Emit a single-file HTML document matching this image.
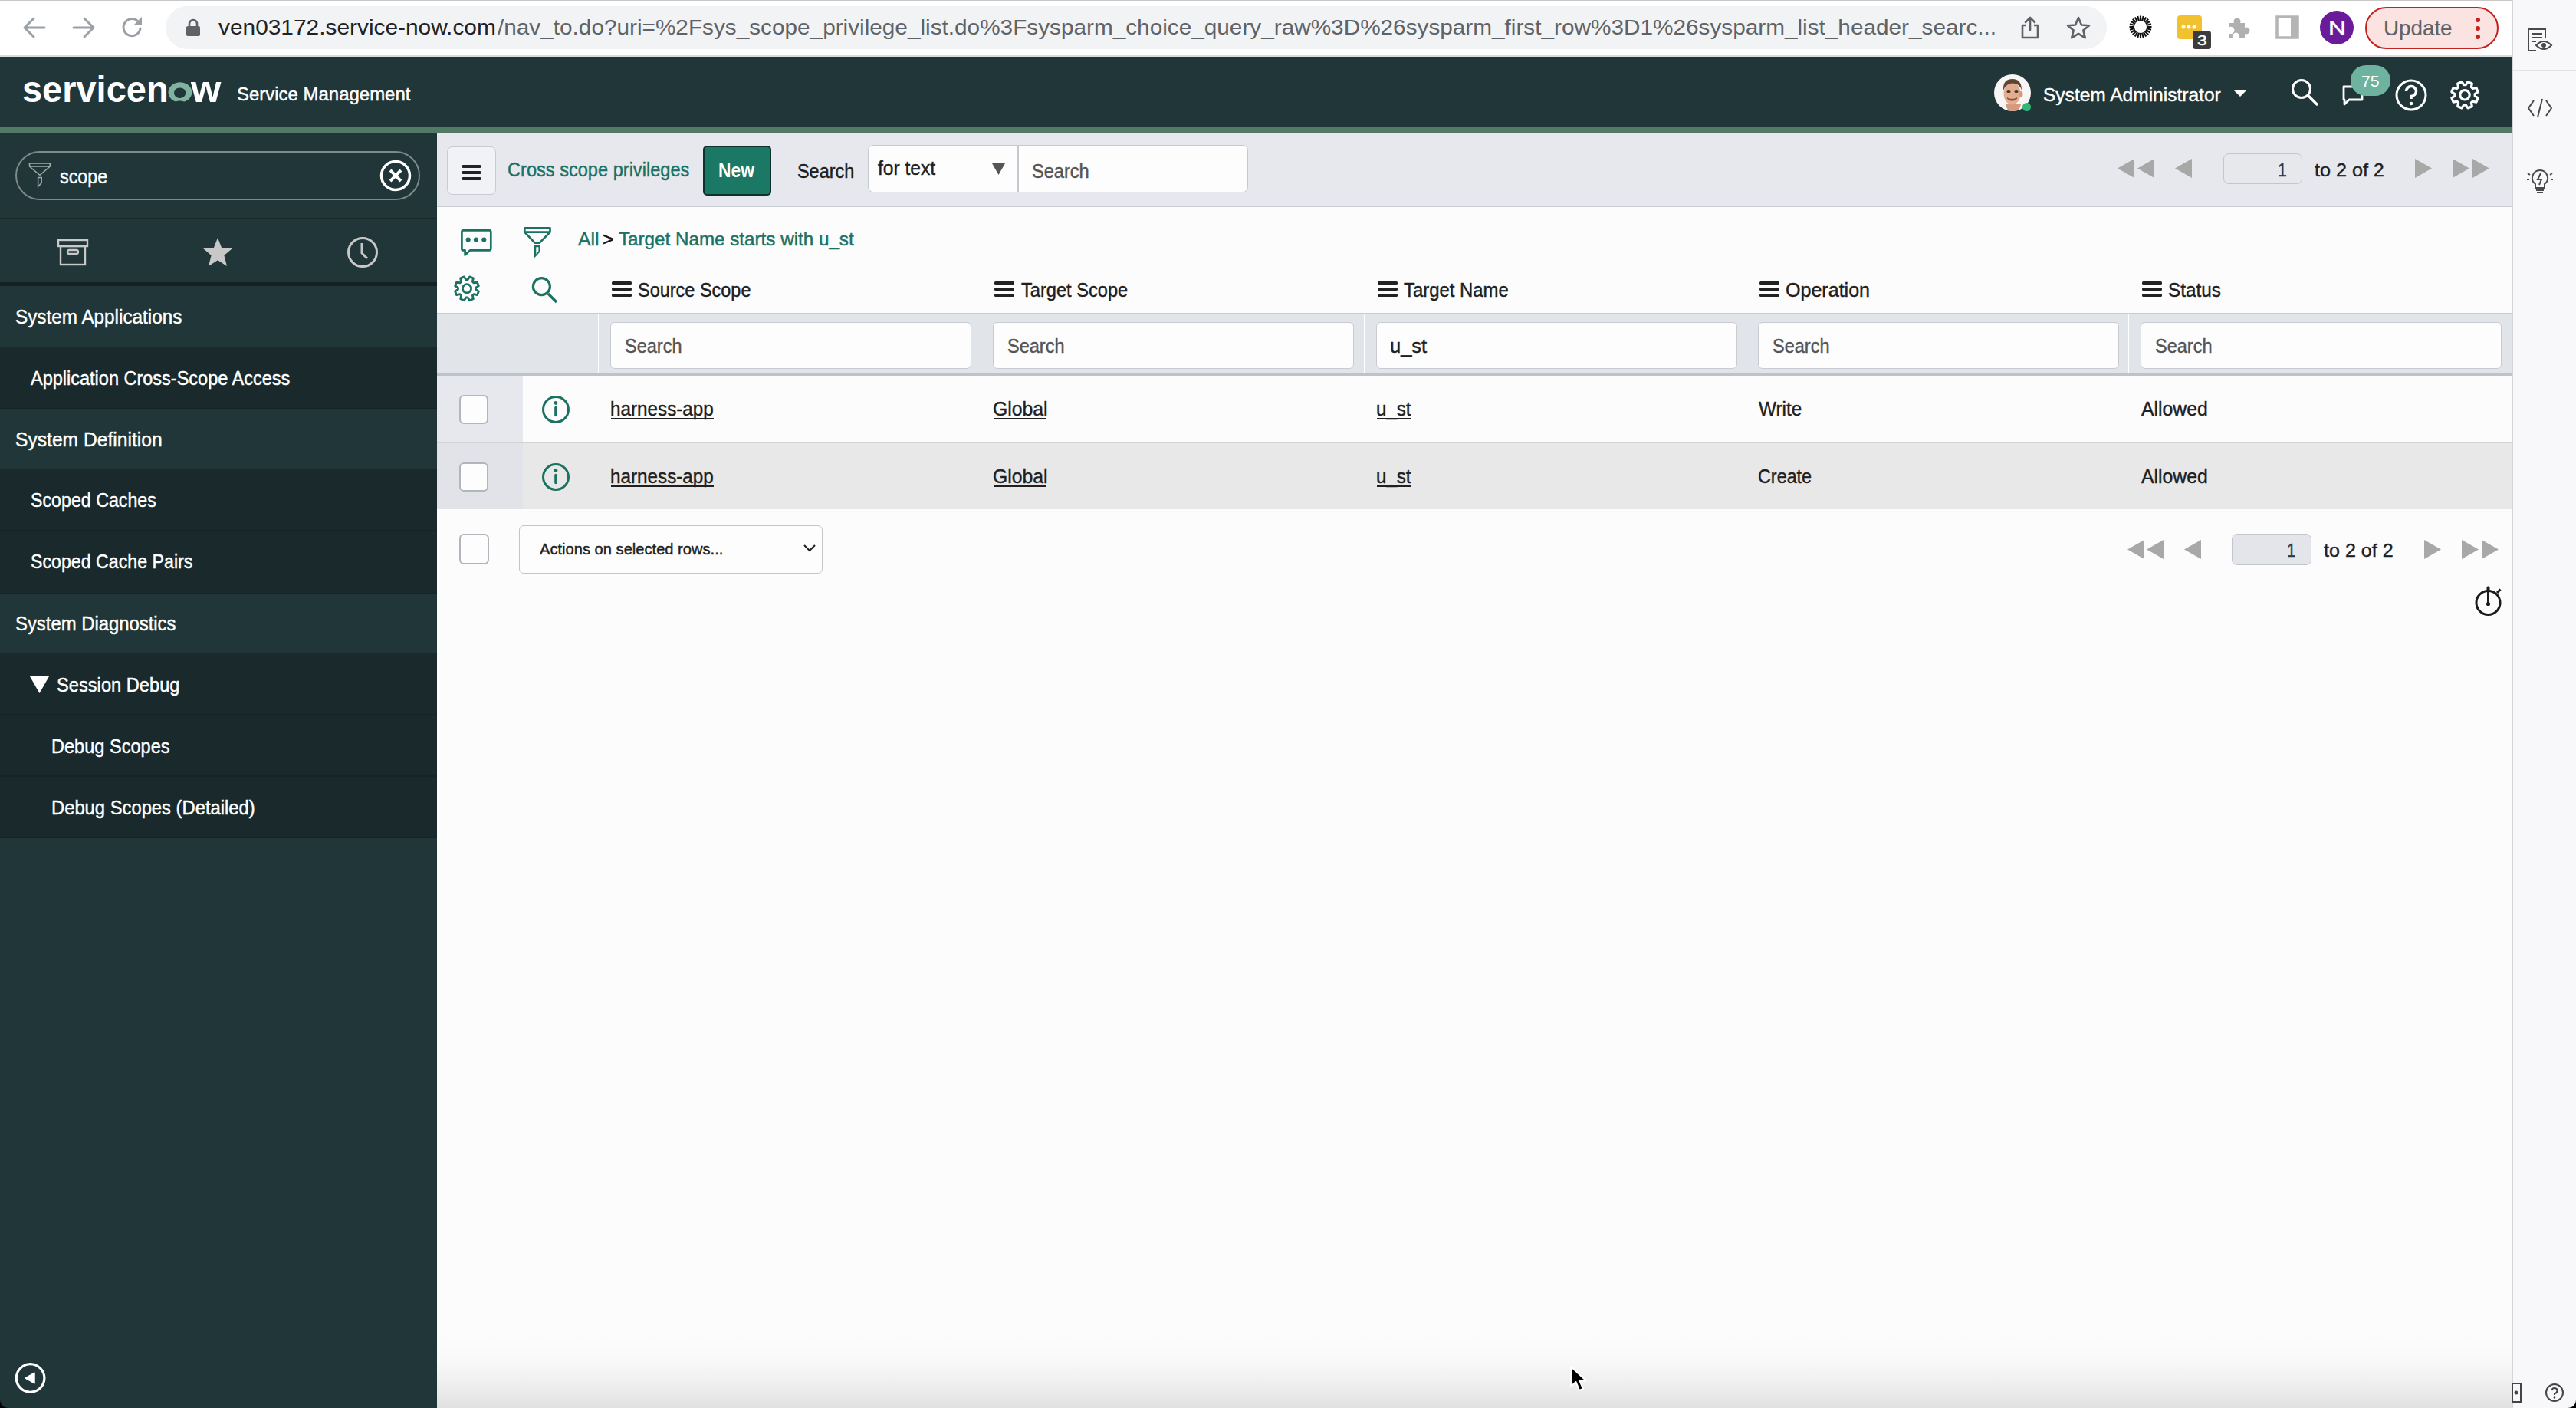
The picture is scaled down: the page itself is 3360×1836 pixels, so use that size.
<!DOCTYPE html>
<html><head><meta charset="utf-8"><style>
html,body{margin:0;padding:0;width:3360px;height:1836px;overflow:hidden;background:#fff;font-family:'Liberation Sans', sans-serif;}
svg{overflow:visible}
</style></head><body>
<div style="position:absolute;left:0px;top:0px;width:3276px;height:74px;background:#ffffff"></div>
<div style="position:absolute;left:0px;top:0px;width:3276px;height:1px;background:#c8c8c8"></div>
<div style="position:absolute;left:0px;top:72px;width:3276px;height:2px;background:#dcdcdc"></div>
<div style="position:absolute;left:216px;top:8px;width:2532px;height:56px;background:#f1f3f4;border-radius:28px"></div>
<svg style="position:absolute;left:28px;top:20px;" width="34" height="32" viewBox="0 0 34 32"><path d="M30 16H5M16 4L4 16L16 28" stroke="#9aa0a6" stroke-width="3" fill="none" stroke-linecap="round" stroke-linejoin="round"/></svg>
<svg style="position:absolute;left:92px;top:20px;" width="34" height="32" viewBox="0 0 34 32"><path d="M4 16H29M18 4L30 16L18 28" stroke="#9aa0a6" stroke-width="3" fill="none" stroke-linecap="round" stroke-linejoin="round"/></svg>
<svg style="position:absolute;left:157px;top:20px;" width="32" height="32" viewBox="0 0 32 32"><path d="M26 17A11 11 0 1 1 22.5 7.5" stroke="#9aa0a6" stroke-width="3" fill="none" stroke-linecap="round"/><path d="M28 2V12H18Z" fill="#9aa0a6"/></svg>
<svg style="position:absolute;left:242px;top:24px;" width="20" height="24" viewBox="0 0 20 24"><path d="M5 11V7A5 5 0 0 1 15 7V11" stroke="#5f6368" stroke-width="2.6" fill="none"/><rect x="1" y="10" width="18" height="13" rx="2" fill="#5f6368"/></svg>
<svg style="position:absolute;left:2634px;top:20px;" width="28" height="32" viewBox="0 0 28 32"><path d="M14 3V19M8 9L14 3L20 9" stroke="#5f6368" stroke-width="2.6" fill="none" stroke-linejoin="round" stroke-linecap="round"/><path d="M9 13H4V29H24V13H19" stroke="#5f6368" stroke-width="2.6" fill="none" stroke-linejoin="round"/></svg>
<svg style="position:absolute;left:2694px;top:20px;" width="34" height="31" viewBox="0 0 34 31"><path d="M17 3L21 12.5L31 13.2L23.3 19.6L25.8 29.3L17 23.9L8.2 29.3L10.7 19.6L3 13.2L13 12.5Z" stroke="#5f6368" stroke-width="2.6" fill="none" stroke-linejoin="round"/></svg>
<svg style="position:absolute;left:2777px;top:20px;" width="30" height="30" viewBox="0 0 30 30"><line x1="15" y1="15" x2="29.50" y2="15.00" stroke="#111" stroke-width="2.2"/><line x1="15" y1="15" x2="29.01" y2="18.75" stroke="#111" stroke-width="2.2"/><line x1="15" y1="15" x2="27.56" y2="22.25" stroke="#111" stroke-width="2.2"/><line x1="15" y1="15" x2="25.25" y2="25.25" stroke="#111" stroke-width="2.2"/><line x1="15" y1="15" x2="22.25" y2="27.56" stroke="#111" stroke-width="2.2"/><line x1="15" y1="15" x2="18.75" y2="29.01" stroke="#111" stroke-width="2.2"/><line x1="15" y1="15" x2="15.00" y2="29.50" stroke="#111" stroke-width="2.2"/><line x1="15" y1="15" x2="11.25" y2="29.01" stroke="#111" stroke-width="2.2"/><line x1="15" y1="15" x2="7.75" y2="27.56" stroke="#111" stroke-width="2.2"/><line x1="15" y1="15" x2="4.75" y2="25.25" stroke="#111" stroke-width="2.2"/><line x1="15" y1="15" x2="2.44" y2="22.25" stroke="#111" stroke-width="2.2"/><line x1="15" y1="15" x2="0.99" y2="18.75" stroke="#111" stroke-width="2.2"/><line x1="15" y1="15" x2="0.50" y2="15.00" stroke="#111" stroke-width="2.2"/><line x1="15" y1="15" x2="0.99" y2="11.25" stroke="#111" stroke-width="2.2"/><line x1="15" y1="15" x2="2.44" y2="7.75" stroke="#111" stroke-width="2.2"/><line x1="15" y1="15" x2="4.75" y2="4.75" stroke="#111" stroke-width="2.2"/><line x1="15" y1="15" x2="7.75" y2="2.44" stroke="#111" stroke-width="2.2"/><line x1="15" y1="15" x2="11.25" y2="0.99" stroke="#111" stroke-width="2.2"/><line x1="15" y1="15" x2="15.00" y2="0.50" stroke="#111" stroke-width="2.2"/><line x1="15" y1="15" x2="18.75" y2="0.99" stroke="#111" stroke-width="2.2"/><line x1="15" y1="15" x2="22.25" y2="2.44" stroke="#111" stroke-width="2.2"/><line x1="15" y1="15" x2="25.25" y2="4.75" stroke="#111" stroke-width="2.2"/><line x1="15" y1="15" x2="27.56" y2="7.75" stroke="#111" stroke-width="2.2"/><line x1="15" y1="15" x2="29.01" y2="11.25" stroke="#111" stroke-width="2.2"/><circle cx="15" cy="15" r="8" fill="#fff"/></svg>
<div style="position:absolute;left:2840px;top:20px;width:32px;height:31px;background:#f2c12e;border-radius:4px"></div>
<svg style="position:absolute;left:2844px;top:30px;" width="24" height="10" viewBox="0 0 24 10"><circle cx="4" cy="5" r="2.5" fill="#fff"/><circle cx="11" cy="5" r="2.5" fill="#fff"/><circle cx="18" cy="5" r="2.5" fill="#fff"/></svg>
<div style="position:absolute;left:2860px;top:40px;width:24px;height:24px;background:#3c3c3c;border-radius:4px"></div>
<svg style="position:absolute;left:2905px;top:20px;" width="30" height="31" viewBox="0 0 30 31"><path d="M2 10H9A4.5 4.5 0 1 1 17 10H23V16A4.5 4.5 0 1 1 23 24V30H15A4.5 4.5 0 1 0 8 30H2V23A4.5 4.5 0 1 0 2 16Z" fill="#b0b0b0"/></svg>
<svg style="position:absolute;left:2968px;top:20px;" width="32" height="31" viewBox="0 0 32 31"><rect x="2" y="2" width="27" height="27" fill="none" stroke="#b5b5b5" stroke-width="3.5"/><rect x="20" y="2" width="9" height="27" fill="#b5b5b5"/></svg>
<div style="position:absolute;left:3026px;top:14px;width:44px;height:44px;background:#6a1b9a;border-radius:50%"></div>
<div style="position:absolute;left:3085px;top:9px;width:174px;height:55px;background:#fbe3e2;border:2.5px solid #c5221f;border-radius:28px;box-sizing:border-box"></div>
<svg style="position:absolute;left:3226px;top:22px;" width="12" height="32" viewBox="0 0 12 32"><circle cx="6" cy="4" r="3" fill="#c5221f"/><circle cx="6" cy="15" r="3" fill="#c5221f"/><circle cx="6" cy="26" r="3" fill="#c5221f"/></svg>
<div style="position:absolute;left:3276px;top:0px;width:84px;height:1836px;background:#f8f8fa;border-left:2px solid #d5d5d8;box-sizing:border-box"></div>
<div style="position:absolute;left:3278px;top:10px;width:82px;height:1px;background:#e3e3e6"></div>
<div style="position:absolute;left:3278px;top:91px;width:82px;height:1px;background:#e3e3e6"></div>
<div style="position:absolute;left:3278px;top:1790px;width:82px;height:1px;background:#e3e3e6"></div>
<svg style="position:absolute;left:3296px;top:36px;" width="34" height="32" viewBox="0 0 34 32"><path d="M2 2H24V14M2 2V30H12" stroke="#4a4a4a" stroke-width="2" fill="none"/><path d="M6 8H20M6 13H20M6 18H12" stroke="#4a4a4a" stroke-width="2"/><path d="M12 23Q22 13 32 23Q22 33 12 23Z" fill="#fff" stroke="#4a4a4a" stroke-width="2"/><circle cx="22" cy="23" r="3" fill="#4a4a4a"/></svg>
<svg style="position:absolute;left:3296px;top:128px;" width="34" height="26" viewBox="0 0 34 26"><path d="M9 3L2 13L9 23M25 3L32 13L25 23M20 1L14 25" stroke="#4a4a4a" stroke-width="2" fill="none"/></svg>
<svg style="position:absolute;left:3294px;top:218px;" width="38" height="36" viewBox="0 0 38 36"><path d="M19 4A10 10 0 0 0 13 22V27H25V22A10 10 0 0 0 19 4Z" stroke="#4a4a4a" stroke-width="2" fill="none"/><path d="M14 30H24M15 33H23" stroke="#4a4a4a" stroke-width="2"/><path d="M20 8L16 16H21L18 23" stroke="#4a4a4a" stroke-width="2" fill="none"/><path d="M3 8L6 10M35 8L32 10M2 16H5M33 16H36" stroke="#4a4a4a" stroke-width="2"/></svg>
<svg style="position:absolute;left:3276px;top:1803px;" width="14" height="26" viewBox="0 0 14 26"><rect x="1" y="1" width="11" height="24" fill="none" stroke="#444" stroke-width="2"/><circle cx="6" cy="13" r="2.5" fill="#444"/></svg>
<svg style="position:absolute;left:3319px;top:1803px;" width="26" height="26" viewBox="0 0 26 26"><circle cx="13" cy="13" r="11" fill="none" stroke="#444" stroke-width="2"/><path d="M9.5 10A3.5 3.5 0 1 1 13 14V16" stroke="#444" stroke-width="2" fill="none"/><circle cx="13" cy="19.5" r="1.3" fill="#444"/></svg>
<div style="position:absolute;left:0px;top:74px;width:3276px;height:92px;background:#203638"></div>
<div style="position:absolute;left:0px;top:166px;width:3276px;height:8px;background:#527a66"></div>
<svg style="position:absolute;left:215px;top:103px;" width="40" height="36" viewBox="0 0 40 36"><path fill-rule="evenodd" fill="#7fb39f" d="M19.9 4.3A15.4 13.1 0 1 1 19.89 4.3ZM19.6 11.4A7.6 6.8 0 1 0 19.61 11.4Z"/><ellipse cx="19.6" cy="32.6" rx="8" ry="4.2" fill="#203638"/></svg>
<svg style="position:absolute;left:2600px;top:96px;" width="50" height="50" viewBox="0 0 50 50"><defs><clipPath id="av"><circle cx="25" cy="25" r="24"/></clipPath></defs><circle cx="25" cy="25" r="24" fill="#f7f5f6"/><g clip-path="url(#av)"><path d="M16 40Q18 50 26 50Q34 50 36 40Z" fill="#d69a7c"/><ellipse cx="24.5" cy="26" rx="11" ry="14.5" fill="#e2ae90"/><ellipse cx="36" cy="27" rx="2.5" ry="4" fill="#d49a7a"/><path d="M13 22Q12 7 25 7Q37 7 37 22Q35 13 25 12.5Q16 13 13 22Z" fill="#5e4434"/><ellipse cx="20" cy="23.5" rx="2.6" ry="1.5" fill="#4a3020"/><ellipse cx="30" cy="23.5" rx="2.6" ry="1.5" fill="#4a3020"/><path d="M18 32Q24.5 38 31 32Q24.5 35 18 32Z" fill="#fff" stroke="#8a5040" stroke-width="1.2"/></g></svg>
<div style="position:absolute;left:2637.5px;top:133.5px;width:11.5px;height:11.5px;background:#2fb877;border-radius:50%"></div>
<svg style="position:absolute;left:2913px;top:117px;" width="18" height="9" viewBox="0 0 18 9"><path d="M0 0H18L9 9Z" fill="#ffffff"/></svg>
<svg style="position:absolute;left:2988px;top:102px;" width="38" height="38" viewBox="0 0 38 38"><circle cx="14" cy="14" r="11.5" stroke="#fff" stroke-width="3" fill="none"/><path d="M22.5 22.5L34 34" stroke="#fff" stroke-width="3.4" stroke-linecap="round"/></svg>
<svg style="position:absolute;left:3054px;top:110px;" width="40" height="30" viewBox="0 0 40 30"><path d="M3 3H27V20H10L4 26V20H3Z" stroke="#fff" stroke-width="2.8" fill="none" stroke-linejoin="round"/></svg>
<div style="position:absolute;left:3066px;top:85px;width:52px;height:40px;background:#6db3a0;border-radius:20px"></div>
<svg style="position:absolute;left:3123px;top:102px;" width="44" height="44" viewBox="0 0 44 44"><circle cx="22" cy="22" r="19" stroke="#fff" stroke-width="3" fill="none"/><path d="M15.5 17A6.5 6.5 0 1 1 22 23.5V27" stroke="#fff" stroke-width="3.6" fill="none"/><circle cx="22" cy="33" r="2.3" fill="#fff"/></svg>
<svg style="position:absolute;left:3190px;top:99px;" width="50" height="50" viewBox="0 0 50 50"><path d="M26.27 11.66 L28.96 7.65 L34.33 9.87 L33.40 14.61 L35.19 16.40 L39.93 15.47 L42.15 20.84 L38.14 23.53 L38.14 26.07 L42.15 28.76 L39.93 34.13 L35.19 33.20 L33.40 34.99 L34.33 39.73 L28.96 41.95 L26.27 37.94 L23.73 37.94 L21.04 41.95 L15.67 39.73 L16.60 34.99 L14.81 33.20 L10.07 34.13 L7.85 28.76 L11.86 26.07 L11.86 23.53 L7.85 20.84 L10.07 15.47 L14.81 16.40 L16.60 14.61 L15.67 9.87 L21.04 7.65 L23.73 11.66Z" stroke="#fff" stroke-width="3.2" fill="none" stroke-linejoin="round"/><circle cx="25" cy="24.8" r="6.2" stroke="#fff" stroke-width="3.2" fill="none"/></svg>
<div style="position:absolute;left:0px;top:174px;width:570px;height:1662px;background:#203638"></div>
<div style="position:absolute;left:20px;top:197px;width:528px;height:64px;border:2px solid #7d8a8b;border-radius:32px;box-sizing:border-box"></div>
<svg style="position:absolute;left:494px;top:207px;" width="44" height="44" viewBox="0 0 44 44"><circle cx="22" cy="22" r="18.5" stroke="#fff" stroke-width="3.5" fill="none"/><path d="M15 15L29 29M29 15L15 29" stroke="#fff" stroke-width="4"/></svg>
<div style="position:absolute;left:0px;top:284px;width:570px;height:1px;background:#182829"></div>
<svg style="position:absolute;left:74px;top:311px;" width="42" height="36" viewBox="0 0 42 36"><rect x="2" y="2" width="38" height="8" fill="none" stroke="#c8c8c8" stroke-width="2.4"/><rect x="5" y="10" width="32" height="24" fill="none" stroke="#c8c8c8" stroke-width="2.4"/><rect x="14" y="15" width="14" height="5" rx="2.5" fill="none" stroke="#c8c8c8" stroke-width="2.4"/></svg>
<svg style="position:absolute;left:263px;top:309px;" width="42" height="40" viewBox="0 0 42 40"><path d="M21 1L26.2 14.3L40 15L29.4 24L33 38L21 30.2L9 38L12.6 24L2 15L15.8 14.3Z" fill="#c8c8c8"/></svg>
<svg style="position:absolute;left:452px;top:308px;" width="42" height="42" viewBox="0 0 42 42"><circle cx="21" cy="21" r="18.5" stroke="#c8c8c8" stroke-width="3" fill="none"/><path d="M20 9V22L27 29" stroke="#c8c8c8" stroke-width="3" fill="none"/></svg>
<div style="position:absolute;left:0px;top:368px;width:570px;height:5px;background:#152224"></div>
<div style="position:absolute;left:0px;top:451.5px;width:570px;height:81.5px;background:#1a2a2c"></div>
<div style="position:absolute;left:0px;top:531.5px;width:570px;height:1.5px;background:#152325"></div>
<div style="position:absolute;left:0px;top:610.5px;width:570px;height:81.75px;background:#1a2a2c"></div>
<div style="position:absolute;left:0px;top:690.75px;width:570px;height:1.5px;background:#152325"></div>
<div style="position:absolute;left:0px;top:692.25px;width:570px;height:81.75px;background:#1a2a2c"></div>
<div style="position:absolute;left:0px;top:772.5px;width:570px;height:1.5px;background:#152325"></div>
<div style="position:absolute;left:0px;top:851.5px;width:570px;height:80.5px;background:#1a2a2c"></div>
<div style="position:absolute;left:0px;top:930.5px;width:570px;height:1.5px;background:#152325"></div>
<div style="position:absolute;left:0px;top:932px;width:570px;height:80.5px;background:#1a2a2c"></div>
<div style="position:absolute;left:0px;top:1011.0px;width:570px;height:1.5px;background:#152325"></div>
<div style="position:absolute;left:0px;top:1012.5px;width:570px;height:80.5px;background:#1a2a2c"></div>
<div style="position:absolute;left:0px;top:1091.5px;width:570px;height:1.5px;background:#152325"></div>
<svg style="position:absolute;left:39px;top:882px;" width="26" height="23" viewBox="0 0 26 23"><path d="M0 0H25L12.5 22Z" fill="#ffffff"/></svg>
<div style="position:absolute;left:0px;top:1752px;width:570px;height:1px;background:#1a2b2d"></div>
<svg style="position:absolute;left:18px;top:1776px;" width="44" height="44" viewBox="0 0 44 44"><circle cx="21.6" cy="21" r="18.3" stroke="#fff" stroke-width="3.2" fill="none"/><path d="M27.2 13.8V28.2L14.3 21Z" fill="#fff" stroke="#fff" stroke-width="1" stroke-linejoin="round"/></svg>
<div style="position:absolute;left:570px;top:174px;width:2706px;height:1662px;background:#fcfcfc"></div>
<div style="position:absolute;left:570px;top:1745px;width:2706px;height:91px;background:linear-gradient(rgba(0,0,0,0) 0%,rgba(0,0,0,0.015) 35%,rgba(0,0,0,0.06) 70%,rgba(0,0,0,0.11) 100%)"></div>
<div style="position:absolute;left:570px;top:174px;width:2706px;height:95px;background:#e7e8ee"></div>
<div style="position:absolute;left:570px;top:268px;width:2706px;height:2px;background:#ccced6"></div>
<div style="position:absolute;left:583px;top:191px;width:64px;height:63px;background:#f1f2f5;border:1.5px solid #c9cbd2;border-radius:7px;box-sizing:border-box"></div>
<div style="position:absolute;left:602px;top:215px;width:26px;height:4px;background:#222;border-radius:2px"></div>
<div style="position:absolute;left:602px;top:223px;width:26px;height:4px;background:#222;border-radius:2px"></div>
<div style="position:absolute;left:602px;top:231px;width:26px;height:4px;background:#222;border-radius:2px"></div>
<div style="position:absolute;left:917px;top:190px;width:89px;height:65px;background:#1b7865;border:2px solid #0d332c;border-radius:5px;box-sizing:border-box"></div>
<div style="position:absolute;left:1132px;top:189px;width:496px;height:62px;background:#fdfdfd;border:1.5px solid #c6c8cf;border-radius:7px;box-sizing:border-box"></div>
<div style="position:absolute;left:1327px;top:190px;width:1.5px;height:60px;background:#c6c8cf"></div>
<svg style="position:absolute;left:1294px;top:213px;" width="17" height="15" viewBox="0 0 17 15"><path d="M0 0H17L8.5 15Z" fill="#555"/></svg>
<svg style="position:absolute;left:2762px;top:207px;" width="22" height="25" viewBox="0 0 22 25"><path d="M22 0V25L0 12.5Z" fill="#a8a8a8"/></svg>
<svg style="position:absolute;left:2788px;top:207px;" width="22" height="25" viewBox="0 0 22 25"><path d="M22 0V25L0 12.5Z" fill="#a8a8a8"/></svg>
<svg style="position:absolute;left:2837px;top:207px;" width="22" height="25" viewBox="0 0 22 25"><path d="M22 0V25L0 12.5Z" fill="#a8a8a8"/></svg>
<div style="position:absolute;left:2900px;top:200px;width:103px;height:40px;border:1.5px solid #c4c6cd;border-radius:7px;box-sizing:border-box;background:#e6e8ec"></div>
<svg style="position:absolute;left:3150px;top:207px;" width="22" height="25" viewBox="0 0 22 25"><path d="M0 0V25L22 12.5Z" fill="#a8a8a8"/></svg>
<svg style="position:absolute;left:3199px;top:207px;" width="22" height="25" viewBox="0 0 22 25"><path d="M0 0V25L22 12.5Z" fill="#a8a8a8"/></svg>
<svg style="position:absolute;left:3225px;top:207px;" width="22" height="25" viewBox="0 0 22 25"><path d="M0 0V25L22 12.5Z" fill="#a8a8a8"/></svg>
<svg style="position:absolute;left:584px;top:351px;" width="50" height="50" viewBox="0 0 50 50"><path d="M26.11 13.75 L28.55 9.90 L33.37 11.90 L32.38 16.35 L33.95 17.92 L38.40 16.93 L40.40 21.75 L36.55 24.19 L36.55 26.41 L40.40 28.85 L38.40 33.67 L33.95 32.68 L32.38 34.25 L33.37 38.70 L28.55 40.70 L26.11 36.85 L23.89 36.85 L21.45 40.70 L16.63 38.70 L17.62 34.25 L16.05 32.68 L11.60 33.67 L9.60 28.85 L13.45 26.41 L13.45 24.19 L9.60 21.75 L11.60 16.93 L16.05 17.92 L17.62 16.35 L16.63 11.90 L21.45 9.90 L23.89 13.75Z" stroke="#1b7263" stroke-width="2.8" fill="none" stroke-linejoin="round"/><circle cx="25" cy="25.3" r="5.6" stroke="#1b7263" stroke-width="2.8" fill="none"/></svg>
<svg style="position:absolute;left:692px;top:360px;" width="38" height="38" viewBox="0 0 38 38"><circle cx="14.4" cy="13.7" r="11" stroke="#1b7263" stroke-width="3.2" fill="none"/><path d="M23 23L34 34" stroke="#1b7263" stroke-width="3.6" stroke-linecap="butt"/></svg>
<div style="position:absolute;left:798px;top:367.0px;width:26px;height:4px;background:#222;border-radius:1.5px"></div>
<div style="position:absolute;left:798px;top:375.2px;width:26px;height:4px;background:#222;border-radius:1.5px"></div>
<div style="position:absolute;left:798px;top:383.4px;width:26px;height:4px;background:#222;border-radius:1.5px"></div>
<div style="position:absolute;left:1297px;top:367.0px;width:26px;height:4px;background:#222;border-radius:1.5px"></div>
<div style="position:absolute;left:1297px;top:375.2px;width:26px;height:4px;background:#222;border-radius:1.5px"></div>
<div style="position:absolute;left:1297px;top:383.4px;width:26px;height:4px;background:#222;border-radius:1.5px"></div>
<div style="position:absolute;left:1796.5px;top:367.0px;width:26px;height:4px;background:#222;border-radius:1.5px"></div>
<div style="position:absolute;left:1796.5px;top:375.2px;width:26px;height:4px;background:#222;border-radius:1.5px"></div>
<div style="position:absolute;left:1796.5px;top:383.4px;width:26px;height:4px;background:#222;border-radius:1.5px"></div>
<div style="position:absolute;left:2295px;top:367.0px;width:26px;height:4px;background:#222;border-radius:1.5px"></div>
<div style="position:absolute;left:2295px;top:375.2px;width:26px;height:4px;background:#222;border-radius:1.5px"></div>
<div style="position:absolute;left:2295px;top:383.4px;width:26px;height:4px;background:#222;border-radius:1.5px"></div>
<div style="position:absolute;left:2794px;top:367.0px;width:26px;height:4px;background:#222;border-radius:1.5px"></div>
<div style="position:absolute;left:2794px;top:375.2px;width:26px;height:4px;background:#222;border-radius:1.5px"></div>
<div style="position:absolute;left:2794px;top:383.4px;width:26px;height:4px;background:#222;border-radius:1.5px"></div>
<div style="position:absolute;left:570px;top:408px;width:2706px;height:79px;background:#e1e5ea"></div>
<div style="position:absolute;left:570px;top:408px;width:2706px;height:2px;background:#c9ccd3"></div>
<div style="position:absolute;left:570px;top:487px;width:2706px;height:3px;background:#bfc2c8"></div>
<div style="position:absolute;left:780px;top:410px;width:1.2px;height:76px;background:#ffffff"></div>
<div style="position:absolute;left:796px;top:419.5px;width:471px;height:61px;background:#fdfdfd;border:1.5px solid #c8cbd1;border-radius:6px;box-sizing:border-box"></div>
<div style="position:absolute;left:1279px;top:410px;width:1.2px;height:76px;background:#ffffff"></div>
<div style="position:absolute;left:1295px;top:419.5px;width:471px;height:61px;background:#fdfdfd;border:1.5px solid #c8cbd1;border-radius:6px;box-sizing:border-box"></div>
<div style="position:absolute;left:1778.5px;top:410px;width:1.2px;height:76px;background:#ffffff"></div>
<div style="position:absolute;left:1794.5px;top:419.5px;width:471px;height:61px;background:#fdfdfd;border:1.5px solid #c8cbd1;border-radius:6px;box-sizing:border-box"></div>
<div style="position:absolute;left:2277px;top:410px;width:1.2px;height:76px;background:#ffffff"></div>
<div style="position:absolute;left:2293px;top:419.5px;width:471px;height:61px;background:#fdfdfd;border:1.5px solid #c8cbd1;border-radius:6px;box-sizing:border-box"></div>
<div style="position:absolute;left:2776px;top:410px;width:1.2px;height:76px;background:#ffffff"></div>
<div style="position:absolute;left:2792px;top:419.5px;width:471px;height:61px;background:#fdfdfd;border:1.5px solid #c8cbd1;border-radius:6px;box-sizing:border-box"></div>
<div style="position:absolute;left:570px;top:490px;width:112px;height:86px;background:#e7e8ee"></div>
<div style="position:absolute;left:570px;top:576px;width:2706px;height:2px;background:#d3d3d3"></div>
<div style="position:absolute;left:570px;top:578px;width:2706px;height:86px;background:#e8e8e8"></div>
<div style="position:absolute;left:570px;top:578px;width:112px;height:86px;background:#e2e3e8"></div>
<div style="position:absolute;left:599px;top:515px;width:38px;height:38px;background:#fdfdfd;border:2px solid #b3b5bc;border-radius:6px;box-sizing:border-box"></div>
<svg style="position:absolute;left:705px;top:514px;" width="40" height="40" viewBox="0 0 40 40"><circle cx="20" cy="20" r="16.5" stroke="#1b7263" stroke-width="3" fill="none"/><circle cx="20" cy="11.5" r="2.4" fill="#1b7263"/><path d="M20 17.5V27.5" stroke="#1b7263" stroke-width="3.6" stroke-linecap="round"/></svg>
<div style="position:absolute;left:797px;top:545.1px;width:133.70000000000005px;height:2px;background:#1f1f1f"></div>
<div style="position:absolute;left:1296px;top:545.1px;width:69px;height:2px;background:#1f1f1f"></div>
<div style="position:absolute;left:1795.5px;top:545.1px;width:44.5px;height:2px;background:#1f1f1f"></div>
<div style="position:absolute;left:599px;top:603px;width:38px;height:38px;background:#fdfdfd;border:2px solid #b3b5bc;border-radius:6px;box-sizing:border-box"></div>
<svg style="position:absolute;left:705px;top:602px;" width="40" height="40" viewBox="0 0 40 40"><circle cx="20" cy="20" r="16.5" stroke="#1b7263" stroke-width="3" fill="none"/><circle cx="20" cy="11.5" r="2.4" fill="#1b7263"/><path d="M20 17.5V27.5" stroke="#1b7263" stroke-width="3.6" stroke-linecap="round"/></svg>
<div style="position:absolute;left:797px;top:633.1px;width:133.70000000000005px;height:2px;background:#1f1f1f"></div>
<div style="position:absolute;left:1296px;top:633.1px;width:69px;height:2px;background:#1f1f1f"></div>
<div style="position:absolute;left:1795.5px;top:633.1px;width:44.5px;height:2px;background:#1f1f1f"></div>
<div style="position:absolute;left:599px;top:696px;width:39px;height:40px;background:#fdfdfd;border:2px solid #b3b5bc;border-radius:6px;box-sizing:border-box"></div>
<div style="position:absolute;left:677px;top:685px;width:396px;height:63px;background:#fdfdfd;border:1.5px solid #c3c5cb;border-radius:6px;box-sizing:border-box"></div>
<svg style="position:absolute;left:1047px;top:709px;" width="18" height="12" viewBox="0 0 18 12"><path d="M2 2L9 9L16 2" stroke="#222" stroke-width="2.2" fill="none"/></svg>
<svg style="position:absolute;left:2775px;top:704px;" width="22" height="25" viewBox="0 0 22 25"><path d="M22 0V25L0 12.5Z" fill="#a8a8a8"/></svg>
<svg style="position:absolute;left:2800px;top:704px;" width="22" height="25" viewBox="0 0 22 25"><path d="M22 0V25L0 12.5Z" fill="#a8a8a8"/></svg>
<svg style="position:absolute;left:2849px;top:704px;" width="22" height="25" viewBox="0 0 22 25"><path d="M22 0V25L0 12.5Z" fill="#a8a8a8"/></svg>
<div style="position:absolute;left:2911px;top:696px;width:104px;height:41px;border:1.5px solid #c4c6cd;border-radius:7px;box-sizing:border-box;background:#e3e5ea"></div>
<svg style="position:absolute;left:3162px;top:704px;" width="22" height="25" viewBox="0 0 22 25"><path d="M0 0V25L22 12.5Z" fill="#a8a8a8"/></svg>
<svg style="position:absolute;left:3211px;top:704px;" width="22" height="25" viewBox="0 0 22 25"><path d="M0 0V25L22 12.5Z" fill="#a8a8a8"/></svg>
<svg style="position:absolute;left:3237px;top:704px;" width="22" height="25" viewBox="0 0 22 25"><path d="M0 0V25L22 12.5Z" fill="#a8a8a8"/></svg>
<svg style="position:absolute;left:3226px;top:763px;" width="40" height="42" viewBox="0 0 40 42"><circle cx="19.5" cy="23" r="15.5" stroke="#1a1a1a" stroke-width="3" fill="none"/><path d="M19.5 9V24" stroke="#1a1a1a" stroke-width="3"/><circle cx="19.5" cy="24.5" r="2.6" fill="#1a1a1a"/><rect x="17.5" y="1.5" width="4" height="5.5" rx="1.5" fill="#1a1a1a"/><path d="M31 10L35.5 5.5" stroke="#1a1a1a" stroke-width="3"/></svg>
<svg style="position:absolute;left:2046px;top:1780px;" width="26" height="38" viewBox="0 0 26 38"><path d="M3 2V28L9.5 22L14 33L19 31L14.5 20.5H23Z" fill="#000" stroke="#fff" stroke-width="2" stroke-linejoin="round"/></svg>
<svg style="position:absolute;left:0;top:0" width="3360" height="1836"><path d="M38.5 212.9H65.3V217L52.3 228H51.5L38.5 217Z M38.5 217H65.3" stroke="#a3abac" stroke-width="1.6" fill="none" stroke-linejoin="round"/><path d="M49.6 231.5H54.2V238.5L49.6 243.3Z" stroke="#a3abac" stroke-width="1.5" fill="none"/><path d="M0 1824Q0 1836 12 1836H0Z" fill="#000"/><path d="M3360 1824Q3360 1836 3348 1836H3360Z" fill="#000"/><path d="M605 300.4H638.5A2 2 0 0 1 640.3 302.4V324.6A2 2 0 0 1 638.5 326.4H613L606.6 332.5V326.4H604.4A2 2 0 0 1 602.4 324.4V302.4A2 2 0 0 1 604.4 300.4Z" stroke="#1b7263" stroke-width="2.7" fill="none" stroke-linejoin="round"/><circle cx="610.7" cy="312.5" r="3.1" fill="#1b7263"/><circle cx="620.9" cy="312.5" r="3.1" fill="#1b7263"/><circle cx="631.3" cy="312.5" r="3.1" fill="#1b7263"/><path d="M684.3 297.4H717.5V302.6L703.8 316.6H697.6L684.3 302.6Z M684.3 302.6H717.5" stroke="#1b7263" stroke-width="2.7" fill="none" stroke-linejoin="round"/><path fill-rule="evenodd" d="M696.8 319.8H705V327.8L697.6 335.8H696.8Z M699.3 322.3V331.2L702.4 327.6V322.3Z" fill="#1b7263"/></svg>
<div style="position:absolute;left:285.00px;top:19.80px;font-size:28.5px;line-height:31.84px;font-weight:400;color:#202124;white-space:pre;-webkit-text-stroke:0.45px #202124;transform:scaleX(1.0477);transform-origin:0 0;-webkit-text-stroke:0;">ven03172.service-now.com</div>
<div style="position:absolute;left:649.00px;top:19.80px;font-size:28.5px;line-height:31.84px;font-weight:400;color:#5f6368;white-space:pre;-webkit-text-stroke:0.45px #5f6368;transform:scaleX(1.0437);transform-origin:0 0;-webkit-text-stroke:0;">/nav_to.do?uri=%2Fsys_scope_privilege_list.do%3Fsysparm_choice_query_raw%3D%26sysparm_first_row%3D1%26sysparm_list_header_searc...</div>
<div style="position:absolute;left:2866.00px;top:41.80px;font-size:19px;line-height:21.23px;font-weight:400;color:#ffffff;white-space:pre;-webkit-text-stroke:0.45px #ffffff;transform:scaleX(1.2000);transform-origin:0 0;">3</div>
<div style="position:absolute;left:3036.67px;top:24.27px;font-size:24px;line-height:26.81px;font-weight:400;color:#ffffff;white-space:pre;-webkit-text-stroke:0.45px #ffffff;transform:scaleX(1.3333);transform-origin:0 0;">N</div>
<div style="position:absolute;left:3109.02px;top:21.25px;font-size:28px;line-height:31.28px;font-weight:400;color:#5f6368;white-space:pre;-webkit-text-stroke:0.45px #5f6368;transform:scaleX(0.9918);transform-origin:0 0;-webkit-text-stroke:0.2px #5f6368;">Update</div>
<div style="position:absolute;left:29.04px;top:89.24px;font-size:49px;line-height:54.74px;font-weight:700;color:#ffffff;white-space:pre;transform:scaleX(0.9582);transform-origin:0 0;">servicen</div>
<div style="position:absolute;left:248.53px;top:89.24px;font-size:49px;line-height:54.74px;font-weight:700;color:#ffffff;white-space:pre;transform:scaleX(1.0325);transform-origin:0 0;">w</div>
<div style="position:absolute;left:309.43px;top:109.23px;font-size:24.6px;line-height:27.48px;font-weight:400;color:#ffffff;white-space:pre;-webkit-text-stroke:0.45px #ffffff;transform:scaleX(0.9743);transform-origin:0 0;">Service Management</div>
<div style="position:absolute;left:2664.61px;top:109.95px;font-size:24.8px;line-height:27.71px;font-weight:400;color:#ffffff;white-space:pre;-webkit-text-stroke:0.45px #ffffff;transform:scaleX(0.9890);transform-origin:0 0;">System Administrator</div>
<div style="position:absolute;left:3079.99px;top:94.29px;font-size:21px;line-height:23.46px;font-weight:400;color:#ffffff;white-space:pre;-webkit-text-stroke:0.45px #ffffff;transform:scaleX(1.0148);transform-origin:0 0;-webkit-text-stroke:0;">75</div>
<div style="position:absolute;left:78.40px;top:215.91px;font-size:25.5px;line-height:28.49px;font-weight:400;color:#ffffff;white-space:pre;-webkit-text-stroke:0.45px #ffffff;transform:scaleX(0.9165);transform-origin:0 0;">scope</div>
<div style="position:absolute;left:20.05px;top:398.81px;font-size:25.5px;line-height:28.49px;font-weight:400;color:#ffffff;white-space:pre;-webkit-text-stroke:0.45px #ffffff;transform:scaleX(0.9524);transform-origin:0 0;">System Applications</div>
<div style="position:absolute;left:39.70px;top:479.11px;font-size:25.5px;line-height:28.49px;font-weight:400;color:#ffffff;white-space:pre;-webkit-text-stroke:0.45px #ffffff;transform:scaleX(0.9216);transform-origin:0 0;">Application Cross-Scope Access</div>
<div style="position:absolute;left:20.03px;top:558.51px;font-size:25.5px;line-height:28.49px;font-weight:400;color:#ffffff;white-space:pre;-webkit-text-stroke:0.45px #ffffff;transform:scaleX(0.9657);transform-origin:0 0;">System Definition</div>
<div style="position:absolute;left:39.89px;top:638.31px;font-size:25.5px;line-height:28.49px;font-weight:400;color:#ffffff;white-space:pre;-webkit-text-stroke:0.45px #ffffff;transform:scaleX(0.9098);transform-origin:0 0;">Scoped Caches</div>
<div style="position:absolute;left:39.89px;top:718.41px;font-size:25.5px;line-height:28.49px;font-weight:400;color:#ffffff;white-space:pre;-webkit-text-stroke:0.45px #ffffff;transform:scaleX(0.9094);transform-origin:0 0;">Scoped Cache Pairs</div>
<div style="position:absolute;left:20.06px;top:798.51px;font-size:25.5px;line-height:28.49px;font-weight:400;color:#ffffff;white-space:pre;-webkit-text-stroke:0.45px #ffffff;transform:scaleX(0.9354);transform-origin:0 0;">System Diagnostics</div>
<div style="position:absolute;left:73.57px;top:879.11px;font-size:25.5px;line-height:28.49px;font-weight:400;color:#ffffff;white-space:pre;-webkit-text-stroke:0.45px #ffffff;transform:scaleX(0.9282);transform-origin:0 0;">Session Debug</div>
<div style="position:absolute;left:66.75px;top:959.11px;font-size:25.5px;line-height:28.49px;font-weight:400;color:#ffffff;white-space:pre;-webkit-text-stroke:0.45px #ffffff;transform:scaleX(0.9238);transform-origin:0 0;">Debug Scopes</div>
<div style="position:absolute;left:66.74px;top:1039.21px;font-size:25.5px;line-height:28.49px;font-weight:400;color:#ffffff;white-space:pre;-webkit-text-stroke:0.45px #ffffff;transform:scaleX(0.9324);transform-origin:0 0;">Debug Scopes (Detailed)</div>
<div style="position:absolute;left:661.76px;top:208.17px;font-size:25px;line-height:27.93px;font-weight:400;color:#1b7263;white-space:pre;-webkit-text-stroke:0.45px #1b7263;transform:scaleX(0.9436);transform-origin:0 0;">Cross scope privileges</div>
<div style="position:absolute;left:937.09px;top:209.17px;font-size:25px;line-height:27.93px;font-weight:700;color:#ffffff;white-space:pre;transform:scaleX(0.9125);transform-origin:0 0;">New</div>
<div style="position:absolute;left:1039.58px;top:208.91px;font-size:25.5px;line-height:28.49px;font-weight:400;color:#1f1f1f;white-space:pre;-webkit-text-stroke:0.45px #1f1f1f;transform:scaleX(0.9184);transform-origin:0 0;">Search</div>
<div style="position:absolute;left:1144.70px;top:205.41px;font-size:25.5px;line-height:28.49px;font-weight:400;color:#1f1f1f;white-space:pre;-webkit-text-stroke:0.45px #1f1f1f;transform:scaleX(0.9646);transform-origin:0 0;">for text</div>
<div style="position:absolute;left:1346.38px;top:208.91px;font-size:25.5px;line-height:28.49px;font-weight:400;color:#555555;white-space:pre;-webkit-text-stroke:0.45px #555555;transform:scaleX(0.9248);transform-origin:0 0;">Search</div>
<div style="position:absolute;left:2970.84px;top:207.52px;font-size:24.5px;line-height:27.37px;font-weight:400;color:#2c3a45;white-space:pre;-webkit-text-stroke:0.45px #2c3a45;transform:scaleX(0.8583);transform-origin:0 0;">1</div>
<div style="position:absolute;left:3018.80px;top:207.52px;font-size:24.5px;line-height:27.37px;font-weight:400;color:#1f1f1f;white-space:pre;-webkit-text-stroke:0.45px #1f1f1f;transform:scaleX(1.0260);transform-origin:0 0;">to 2 of 2</div>
<div style="position:absolute;left:754.00px;top:298.77px;font-size:24px;line-height:26.81px;font-weight:400;color:#1b7263;white-space:pre;-webkit-text-stroke:0.45px #1b7263;transform:scaleX(1.0261);transform-origin:0 0;">All</div>
<div style="position:absolute;left:786.46px;top:298.77px;font-size:24px;line-height:26.81px;font-weight:400;color:#111111;white-space:pre;-webkit-text-stroke:0.45px #111111;transform:scaleX(1.0417);transform-origin:0 0;">&gt;</div>
<div style="position:absolute;left:807.00px;top:298.77px;font-size:24px;line-height:26.81px;font-weight:400;color:#1b7263;white-space:pre;-webkit-text-stroke:0.45px #1b7263;transform:scaleX(1.0084);transform-origin:0 0;">Target Name starts with u_st</div>
<div style="position:absolute;left:831.58px;top:363.71px;font-size:25.5px;line-height:28.49px;font-weight:400;color:#1f1f1f;white-space:pre;-webkit-text-stroke:0.45px #1f1f1f;transform:scaleX(0.9207);transform-origin:0 0;">Source Scope</div>
<div style="position:absolute;left:1331.50px;top:363.71px;font-size:25.5px;line-height:28.49px;font-weight:400;color:#1f1f1f;white-space:pre;-webkit-text-stroke:0.45px #1f1f1f;transform:scaleX(0.9268);transform-origin:0 0;">Target Scope</div>
<div style="position:absolute;left:1831.00px;top:363.71px;font-size:25.5px;line-height:28.49px;font-weight:400;color:#1f1f1f;white-space:pre;-webkit-text-stroke:0.45px #1f1f1f;transform:scaleX(0.9369);transform-origin:0 0;">Target Name</div>
<div style="position:absolute;left:2328.52px;top:363.71px;font-size:25.5px;line-height:28.49px;font-weight:400;color:#1f1f1f;white-space:pre;-webkit-text-stroke:0.45px #1f1f1f;transform:scaleX(0.9827);transform-origin:0 0;">Operation</div>
<div style="position:absolute;left:2827.55px;top:363.71px;font-size:25.5px;line-height:28.49px;font-weight:400;color:#1f1f1f;white-space:pre;-webkit-text-stroke:0.45px #1f1f1f;transform:scaleX(0.9540);transform-origin:0 0;">Status</div>
<div style="position:absolute;left:815.08px;top:436.81px;font-size:25.5px;line-height:28.49px;font-weight:400;color:#555555;white-space:pre;-webkit-text-stroke:0.45px #555555;transform:scaleX(0.9222);transform-origin:0 0;">Search</div>
<div style="position:absolute;left:1314.08px;top:436.81px;font-size:25.5px;line-height:28.49px;font-weight:400;color:#555555;white-space:pre;-webkit-text-stroke:0.45px #555555;transform:scaleX(0.9222);transform-origin:0 0;">Search</div>
<div style="position:absolute;left:1813.00px;top:436.81px;font-size:25.5px;line-height:28.49px;font-weight:400;color:#1f1f1f;white-space:pre;-webkit-text-stroke:0.45px #1f1f1f;">u_st</div>
<div style="position:absolute;left:2312.08px;top:436.81px;font-size:25.5px;line-height:28.49px;font-weight:400;color:#555555;white-space:pre;-webkit-text-stroke:0.45px #555555;transform:scaleX(0.9222);transform-origin:0 0;">Search</div>
<div style="position:absolute;left:2811.08px;top:436.81px;font-size:25.5px;line-height:28.49px;font-weight:400;color:#555555;white-space:pre;-webkit-text-stroke:0.45px #555555;transform:scaleX(0.9222);transform-origin:0 0;">Search</div>
<div style="position:absolute;left:796.05px;top:518.51px;font-size:25.5px;line-height:28.49px;font-weight:400;color:#1f1f1f;white-space:pre;-webkit-text-stroke:0.45px #1f1f1f;transform:scaleX(0.9511);transform-origin:0 0;">harness-app</div>
<div style="position:absolute;left:1295.03px;top:518.51px;font-size:25.5px;line-height:28.49px;font-weight:400;color:#1f1f1f;white-space:pre;-webkit-text-stroke:0.45px #1f1f1f;transform:scaleX(0.9712);transform-origin:0 0;">Global</div>
<div style="position:absolute;left:1794.56px;top:518.51px;font-size:25.5px;line-height:28.49px;font-weight:400;color:#1f1f1f;white-space:pre;-webkit-text-stroke:0.45px #1f1f1f;transform:scaleX(0.9445);transform-origin:0 0;">u_st</div>
<div style="position:absolute;left:2294.00px;top:518.51px;font-size:25.5px;line-height:28.49px;font-weight:400;color:#1f1f1f;white-space:pre;-webkit-text-stroke:0.45px #1f1f1f;transform:scaleX(0.9516);transform-origin:0 0;">Write</div>
<div style="position:absolute;left:2793.00px;top:518.51px;font-size:25.5px;line-height:28.49px;font-weight:400;color:#1f1f1f;white-space:pre;-webkit-text-stroke:0.45px #1f1f1f;transform:scaleX(0.9703);transform-origin:0 0;">Allowed</div>
<div style="position:absolute;left:796.05px;top:606.51px;font-size:25.5px;line-height:28.49px;font-weight:400;color:#1f1f1f;white-space:pre;-webkit-text-stroke:0.45px #1f1f1f;transform:scaleX(0.9511);transform-origin:0 0;">harness-app</div>
<div style="position:absolute;left:1295.03px;top:606.51px;font-size:25.5px;line-height:28.49px;font-weight:400;color:#1f1f1f;white-space:pre;-webkit-text-stroke:0.45px #1f1f1f;transform:scaleX(0.9712);transform-origin:0 0;">Global</div>
<div style="position:absolute;left:1794.56px;top:606.51px;font-size:25.5px;line-height:28.49px;font-weight:400;color:#1f1f1f;white-space:pre;-webkit-text-stroke:0.45px #1f1f1f;transform:scaleX(0.9445);transform-origin:0 0;">u_st</div>
<div style="position:absolute;left:2293.08px;top:606.51px;font-size:25.5px;line-height:28.49px;font-weight:400;color:#1f1f1f;white-space:pre;-webkit-text-stroke:0.45px #1f1f1f;transform:scaleX(0.9157);transform-origin:0 0;">Create</div>
<div style="position:absolute;left:2793.00px;top:606.51px;font-size:25.5px;line-height:28.49px;font-weight:400;color:#1f1f1f;white-space:pre;-webkit-text-stroke:0.45px #1f1f1f;transform:scaleX(0.9703);transform-origin:0 0;">Allowed</div>
<div style="position:absolute;left:704.30px;top:704.74px;font-size:20.5px;line-height:22.90px;font-weight:400;color:#1f1f1f;white-space:pre;-webkit-text-stroke:0.45px #1f1f1f;transform:scaleX(0.9817);transform-origin:0 0;">Actions on selected rows...</div>
<div style="position:absolute;left:2983.17px;top:703.82px;font-size:24.5px;line-height:27.37px;font-weight:400;color:#2c3a45;white-space:pre;-webkit-text-stroke:0.45px #2c3a45;transform:scaleX(0.8333);transform-origin:0 0;">1</div>
<div style="position:absolute;left:3031.00px;top:703.82px;font-size:24.5px;line-height:27.37px;font-weight:400;color:#1f1f1f;white-space:pre;-webkit-text-stroke:0.45px #1f1f1f;transform:scaleX(1.0238);transform-origin:0 0;">to 2 of 2</div>
</body></html>
